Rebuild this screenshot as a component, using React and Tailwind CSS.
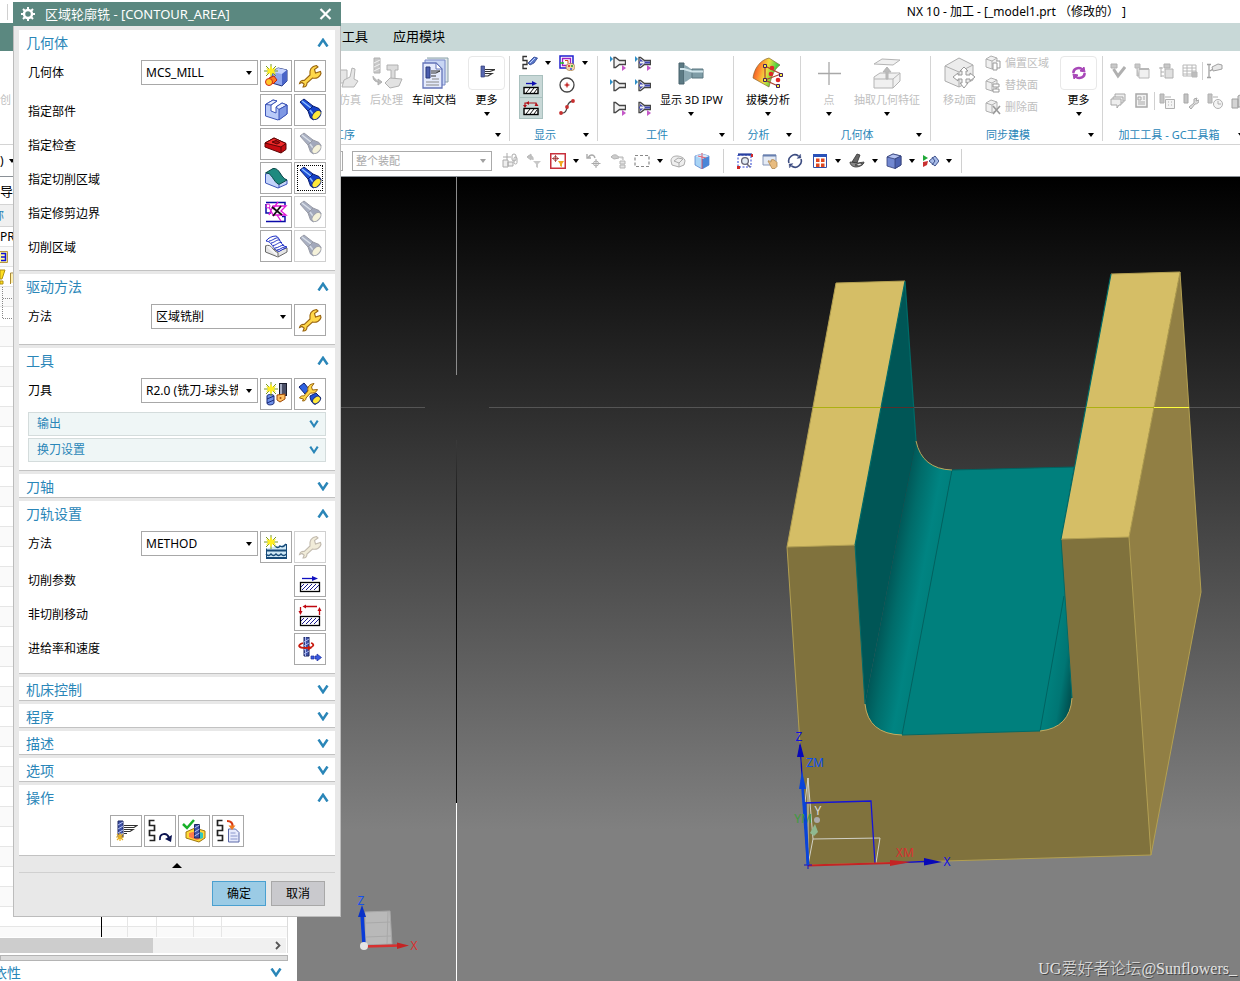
import { useState } from 'react';

const Caret = ({ className = 'text-black' }) => (
  <svg className={`shrink-0 ${className}`} width="6" height="4" viewBox="0 0 6 4" aria-hidden="true">
    <path d="M0 0h6L3 4z" fill="currentColor" />
  </svg>
);

const Chevron = ({ up, small }) => (
  <svg className="shrink-0" width={small ? 10 : 12} height={small ? 8 : 9} viewBox="0 0 12 9" fill="none" stroke="#2a86b8" strokeWidth="2.500" aria-hidden="true">
    <path d={up ? 'M1.500 8.500 6 1.800l4.500 6.700' : 'M1.500 .5 6 7.200 10.500 .5'} />
  </svg>
);

/* ---------- dialog icons, 24px grid ---------- */

const Icon24 = ({ children, faded }) => (
  <svg className={faded ? 'opacity-45' : ''} width="24" height="24" viewBox="0 0 24 24" fill="none" aria-hidden="true">
    {children}
  </svg>
);

const sparkle = (
  <g>
    <path d="M7 0v14M0 7h14M2 2l10 10M12 2 2 12" stroke="#7a9a20" strokeWidth="1" />
    <path d="M7 1.500 8.500 5 12 4l-2 3 2 3-3.500-1L7 12.500 5.500 9 2 10l2-3-2-3 3.500 1z" fill="#ffee20" />
  </g>
);

const TorchShape = () => (
  <g strokeLinejoin="round">
    <path d="M2 4 6 1l9 7-5 5z" fill="#1f50d8" stroke="#0a1e70" />
    <path d="m4 3 9 7" stroke="#8fc0ff" strokeWidth="1.500" />
    <path d="m10 13 5-5 6 2.500 2 3-7.500 8.500-3-2z" fill="#1340c8" stroke="#0a1e70" />
    <path d="m12 12 3 4" stroke="#7fb0ff" strokeWidth="1.500" />
    <ellipse cx="18.500" cy="17" rx="5.500" ry="3.300" transform="rotate(-46 18.500 17)" fill="#ffe93a" stroke="#23367a" />
  </g>
);

const WrenchShape = () => (
  <path
    d="M1.500 19.500c.5-2.500 2.500-3.500 4.800-3L12 11c-1-5 1.500-9 6.500-9.500L20 3l-3.500 2.500L17.500 9l5-1.500.5 2c-1 3.500-4.500 5.500-8.500 4.500L9 19c0 2.500-1.500 4.300-4 4l1.200-2.800L4 18.500z"
    fill="#ffd84a"
    stroke="#9a6510"
    strokeWidth="1.100"
  />
);

const hatch = (y) => (
  <g>
    <rect x="2.500" y={y + 0.5} width="19" height="9" fill="#fff" stroke="#000" strokeWidth="1.300" />
    <path d={`M4 ${y + 8}l6-6M8 ${y + 8}l6-6M12 ${y + 8}l6-6M16 ${y + 8}l5-5M3 ${y + 5}l3-3`} stroke="#1c1c90" />
  </g>
);

const icons = {
  torch: <TorchShape />,
  wrench: <WrenchShape />,
  geometry: (
    <g>
      <path d="m8 8 6-4 9 2v11l-5 5-10-3z" fill="#8fa6ee" stroke="#20347c" />
      <path d="m8 8 10 2 5-4-9-2z" fill="#c6d4ff" />
      <path d="m18 10 5-4v11l-5 5z" fill="#4a65c8" />
      {sparkle}
      <path d="m5 14 5-2 3 4-4 4z" fill="#ff7b20" stroke="#c02010" />
      <circle cx="5" cy="18" r="3.500" fill="#ffc62a" stroke="#d02818" />
    </g>
  ),
  part: (
    <g stroke="#3c55b8" strokeLinejoin="round">
      <path d="M1.500 6.500 9 2l4 1-6 4v6l5 2V9l6-4 5 2v9l-9 6-12.500-4z" fill="#b9caf8" />
      <path d="m1.500 6.500 7.500-4.500 4 1-6 4z" fill="#e6edff" />
      <path d="m12 9 6-4 5 2-8 4.500z" fill="#e6edff" />
      <path d="M15 11.500V22l8-6V7z" fill="#7f98e4" />
    </g>
  ),
  check: (
    <g stroke="#5c0606" strokeLinejoin="round">
      <path d="m1 11 9-5 12 5.500v6L17 21 1 15z" fill="#c80c12" />
      <path d="m1 11 9-5 12 5.500-5 3.500z" fill="#f02a2a" />
      <path d="m8 10 4-1.500 4 2-3 1.500z" fill="#b00a10" />
      <path d="M17 15v6" />
    </g>
  ),
  cutArea: (
    <g strokeLinejoin="round">
      <path d="M1.500 8v9L14 22l9-4v-4c-6-1-6-8-10-9z" fill="#c4d4fa" stroke="#3c55b8" />
      <path d="M1.500 7 9 2.500c7-1 7 9 14 11.500l-8 4.500C9 16 8 6 1.500 7z" fill="#1f8a80" stroke="#0c4a48" />
      <path d="M15 18.500V22" stroke="#3c55b8" />
    </g>
  ),
  trim: (
    <g>
      <path d="M2 2.500h19v3M2 4v9h5M2 21.500h19v-5h-3" stroke="#0a0aa8" strokeWidth="1.500" />
      <path d="m5 7 4 8h13l-5-4 5-5H9l-4 9M13 15l4 6M14 2 9 9" stroke="#e018d8" strokeWidth="1.300" />
      <circle cx="4" cy="6" r="2" stroke="#e018d8" />
      <path d="m8 7 10 8m-1-9-8 10" stroke="#111" strokeWidth="1.800" />
    </g>
  ),
  cutRegion: (
    <g strokeLinejoin="round">
      <path d="M1.500 12v6L14 23l9-5v-4l-9 3z" fill="#e4e4e4" stroke="#666" />
      <path d="M1.500 12C8 9 8 17 14 18.500V23" fill="#f6f6f6" stroke="#666" />
      <path d="M2 7c2-3 6-5 10-5 4 1 4 10 11 11l-8 4.500C9 16 8 7 2 7z" fill="#fff" stroke="#1d2fc4" />
      <path d="M5 7c3 0 7-4 9-3M7 9c3 0 6-4 9-3M9 11.500c3 0 6-4 9-3M11 14c3 0 6-3 9-3M13 16c3 0 5-3 8-3" stroke="#1d2fc4" />
    </g>
  ),
  newTool: (
    <g>
      <path d="M3 14c0-2 7-2 7 0v7c0 2-7 3-7 0z" fill="#6f90e8" stroke="#182a78" />
      <path d="m3 17 7-3m-7 7 7-3" stroke="#182a78" />
      <rect x="15.500" y="1.500" width="7" height="12" fill="#4a4f66" stroke="#1a1d2c" />
      <path d="M17 2v11" stroke="#c5cbe0" strokeWidth="1.500" />
      <path d="m13 13 8-1v5l-5 3-3-2z" fill="#ffc060" stroke="#a04a08" />
      <circle cx="16.500" cy="16" r="1" fill="#a04a08" />
      {sparkle}
    </g>
  ),
  editTool: (
    <g>
      <path d="m1 5 5-4 5 6-4 5z" fill="#2f62e0" stroke="#0a1e70" />
      <path d="m12 14 6-3 5 5-5 6c-3 1-6-4-6-8z" fill="#1f50d8" stroke="#0a1e70" />
      <ellipse cx="18.500" cy="18" rx="4.500" ry="3" transform="rotate(-40 18.500 18)" fill="#ffe93a" stroke="#23367a" />
      <path d="M1.500 16c1-2 2.500-2.500 4.300-2L10 9c-1-4 1.500-7 6-7.500L13.500 5l1 3 5-.5c-1 3-4 4-7 3.500L8 16c0 2-1 3-3.500 3l1-2z" fill="#ffd84a" stroke="#9a6510" />
    </g>
  ),
  method: (
    <g>
      <path d="M2.500 13.500V23h20V9" fill="#cfe8f6" stroke="#174a78" />
      <path d="M2 15.500h20.500" stroke="#174a78" strokeWidth="2" />
      <path d="M2 19q2.500 3 5 0 2.500 3 5 0 2.500 3 5 0 2.500 3 5.500 0M11 11q3 3 5 0 3 2 6-2" stroke="#174a78" strokeWidth="1.400" />
      <path d="M2 23h21" stroke="#174a78" strokeWidth="2" />
      {sparkle}
    </g>
  ),
  cutParams: (
    <g>
      <path d="M4 9.500h11" stroke="#1010c0" strokeWidth="1.300" />
      <path d="m20 9.500-6-2.500v5z" fill="#1010c0" />
      {hatch(13)}
    </g>
  ),
  nonCut: (
    <g>
      <path d="M8 3.500h11M2.500 4v5M21.500 7v5" stroke="#c00810" strokeWidth="1.300" />
      <path d="M4.500 3.500 8 1.500v4zM2.500 12 .5 8h4zM21.500 4l-2 4h4z" fill="#c00810" />
      {hatch(13)}
    </g>
  ),
  feeds: (
    <g>
      <path d="M6 0h5v19H6z" fill="#3f52a8" stroke="#1d2660" />
      <path d="m6 5 5-3m-5 7 5-3m-5 7 5-3m-5 7 5-3M7.500 0v19" stroke="#a9b7ee" />
      <path d="M5 6C-1 8 0 11 8 11s9-4 5-5" stroke="#c81c10" strokeWidth="1.800" />
      <path d="m10 13.500 4-2.500-4-2.500z" fill="#c81c10" />
      <path d="M13 19h3v3h-3z" fill="#3a5ae0" stroke="#1d2fa0" strokeWidth=".7" />
      <path d="M17 19h2v-2l4.500 3.500L19 24v-2h-2z" fill="#3a5ae0" stroke="#1d2fa0" strokeWidth=".7" />
    </g>
  ),
  generate: (
    <g>
      <path d="M4 2h5v16H4z" fill="#3f52a8" stroke="#1d2660" />
      <path d="m4 6 5-3m-5 7 5-3m-5 7 5-3m-5 6 5-3" stroke="#b6c2f2" />
      <path d="M10 6.500h13l-3 2H10M10 10.500h9l-3 2h-6M10 14.500h3" stroke="#333" strokeWidth="1.200" />
      <path d="M6 14v8m-4-4h8M3 15l6 6m0-6-6 6" stroke="#e8b020" strokeWidth="1.200" />
    </g>
  ),
  replay: (
    <g>
      <path d="M6.500 1.500h-5v5h5v5h-5v5h5v5h-5" stroke="#222" strokeWidth="1.700" />
      <path d="M12 21c-1-7 7-8 9-2" stroke="#0c1450" strokeWidth="1.800" />
      <path d="m24 16-1 7-6-3z" fill="#0c1450" />
    </g>
  ),
  verify: (
    <g>
      <path d="m4 13 9-4 10 3v7l-6 4-13-4z" fill="#ffd838" stroke="#a07810" />
      <path d="m7 14 8-2 6 2v5l-6 2-8-3z" fill="#ff7a4a" />
      <path d="m15 12 6 2v5l-3 1z" fill="#30c8c0" />
      <path d="M12.500 5.500h5V19h-5z" fill="#3f52a8" stroke="#1d2660" />
      <path d="m12.500 9 5-3m-5 7 5-3m-5 7 5-3" stroke="#b6c2f2" />
      <path d="m1 5 4 4 7-8" stroke="#18b028" strokeWidth="2.500" />
    </g>
  ),
  list: (
    <g>
      <path d="M6.500 1.500h-5v5h5v5h-5v5h5v5h-5" stroke="#222" strokeWidth="1.700" />
      <path d="M12.500 10h7l3.500 3.500V23H12.500z" fill="#e6eafc" stroke="#5a68a8" />
      <path d="M14.500 14h5m-5 3h7m-7 3h7" stroke="#8a96cc" />
      <path d="M11 2c4 0 6 2 5.500 6" stroke="#d83a10" strokeWidth="2.200" />
      <path d="m12.500 6.500 7 0L16 11z" fill="#f07a20" />
    </g>
  ),
};

/* ---------- small toolbar icons, 16px grid ---------- */

const Icon16 = ({ children }) => (
  <svg className="shrink-0" width="16" height="16" viewBox="0 0 16 16" fill="none" aria-hidden="true">{children}</svg>
);

const miniHatch = (
  <g>
    <rect x="1" y="8.500" width="14" height="6" fill="#fff" stroke="#000" strokeWidth="1.400" />
    <path d="m3 14 4-5m0 5 4-5m0 5 3-4" stroke="#111" />
  </g>
);

const Endmill = ({ fill, left, right }) => (
  <Icon16>
    <path d="M4 2.500h1.500L9.500 5.500h6v4h-6l-4 3H4z" fill="#f2f2f2" stroke="#444" strokeWidth="1.300" />
    {fill && <path d="M4 6.500h11v2H4zM5 4v7l5-3.500z" fill="#3d44b0" />}
    {left && <path d="M0 1v6l3-3z" fill="#2f8fc8" />}
    {right && <path d="M12 10v6l4-3z" fill="#c458c8" />}
  </Icon16>
);

const small = {
  pathTorch: <g><path d="M5 1.500H1v4h4v4H1v4h4" stroke="#333" strokeWidth="1.300" /><path d="m6 8 2-2 4-4 3.500 1L12 8l-4 2z" fill="#5a78c8" stroke="#2c4490" strokeWidth=".8" /><path d="m8 8 5-5" stroke="#c0d2ff" /></g>,
  palette: <g><path d="M1 1h13v12H1z" stroke="#2020d0" strokeWidth="1.500" /><path d="M3.500 3.500h8v7h-8z" stroke="#a020c0" strokeWidth="1.300" /><path d="M6 5.500h3v3" stroke="#d05010" /><path d="M1 8h4" stroke="#20c020" strokeWidth="1.500" /><ellipse cx="11.500" cy="12" rx="4.500" ry="3.600" fill="#efd4a8" stroke="#a87840" strokeWidth=".7" /><circle cx="10" cy="11" r="1" fill="#d02020" /><circle cx="13" cy="11" r="1" fill="#20a020" /><circle cx="12" cy="14" r="1" fill="#3050e0" /></g>,
  cut: <g><path d="M3 4.500h7" stroke="#1010b0" strokeWidth="1.300" /><path d="M14 4.500 9 2v5z" fill="#1010b0" />{miniHatch}</g>,
  nonCut: <g><path d="M2 6V3h11v3" stroke="#b01018" strokeWidth="1.200" /><path d="M2 8 0 5h4zM13.500 3l-2 3h4zM3 3l3-2v4z" fill="#b01018" />{miniHatch}</g>,
  circle: <g><circle cx="8" cy="8" r="7" stroke="#444" strokeWidth="1.300" /><circle cx="8" cy="8" r="1.700" fill="#c83030" /><path d="M8 5v6M5 8h6" stroke="#c83030" strokeWidth=".6" /></g>,
  spline: <g><path d="M2 14c9 1 3-11 12-12" stroke="#444" strokeWidth="1.300" /><circle cx="2" cy="14" r="1.900" fill="#c83030" /><circle cx="8" cy="8" r="1.900" fill="#c83030" /><circle cx="14" cy="2" r="1.900" fill="#c83030" /></g>,
  // disabled ones
  offsetFace: <g stroke="#b0b0b0"><path d="m1 4 5-3 6 2v8l-5 3-6-2z" fill="#f0f0f0" /><path d="m1 4 6 2 5-3M7 6v8" /><path d="M8 8h4v7H8zM11 6h4v7h-3" fill="#fff" stroke="#999" /></g>,
  replaceFace: <g stroke="#b0b0b0"><path d="m1 4 5-3 6 2v8l-5 3-6-2z" fill="#f0f0f0" /><path d="m1 4 6 2 5-3M7 6v8" /><path d="M8 7h6v3H8zm0 5h6v3H8z" fill="#fff" stroke="#999" /></g>,
  deleteFace: <g stroke="#b0b0b0"><path d="m1 4 5-3 6 2v8l-5 3-6-2z" fill="#f0f0f0" /><path d="m1 4 6 2 5-3M7 6v8" /><path d="m8 7 7 8m0-8-7 8" stroke="#999" strokeWidth="1.600" /></g>,
  gcCheck: <g><path d="M1 1h6v4H1z" fill="#c8c8c8" stroke="#b0b0b0" /><path d="m3.500 6 4.500 7 7-9" stroke="#b0b0b0" strokeWidth="3" /></g>,
  gcPart: <g stroke="#b8b8b8"><path d="M1 1h5v4H1zM3 5v8h3" fill="#c8c8c8" /><path d="M5 6h10v9H5z" fill="#f0f0f0" /><path d="M5 6h10" strokeWidth="2" /></g>,
  gcTree: <g stroke="#b0b0b0"><path d="M6 1h6v4H6z" fill="#c8c8c8" /><path d="M3 4v10M1 5h4M3 9h3M3 13h3" /><path d="M7 6h8v9H7z" fill="#e0e0e0" /></g>,
  gcTable: <g stroke="#b8b8b8"><path d="M1 2h13v11H1zM1 5h13M1 8h13M1 11h13M5 2v11M10 2v11" /><path d="M10 9h5v5h-5z" fill="#bdbdbd" /></g>,
  gcFlag: <g stroke="#a0a0a0"><path d="M2 2v12M0 1.500h4M0 14.500h4M3 8l3-2" strokeWidth="1.300" /><path d="m5 4 6-3 4 1v4l-4 1-5 1z" fill="#e8e8e8" /></g>,
  gcStack: <g stroke="#a8a8a8" fill="#eee"><path d="M5 1h10v7H5z" /><path d="M3 4h10v6H3z" /><path d="M1 6h10v6H9l-2 3v-3H1z" /></g>,
  gcDoc: <g stroke="#a8a8a8"><path d="M2 1h11v13H2z" fill="#f2f2f2" strokeWidth="1.500" /><path d="M4 4h3v3H4zM9 4h2M9 6h2M4 9h7M4 11h7" /></g>,
  gcCalc: <g stroke="#b0b0b0"><path d="M1 1h4v9H1zM6 4h6" fill="#c4c4c4" /><path d="M6.500 6.500h9v9h-9zM9 9h1m2 0h1m-4 3h1m2 0h1" fill="#f4f4f4" /></g>,
  gcTool: <g stroke="#a8a8a8"><path d="M1 1h4v9H1z" fill="#c4c4c4" /><path d="m6 14 5-4 0-4 3-1-1 3 3-1c0 3-2 4-4 4l-4 5z" fill="#ddd" /></g>,
  gcClock: <g stroke="#b0b0b0"><path d="M1 1h4v9H1z" fill="#c4c4c4" /><circle cx="11" cy="11" r="4.500" fill="#f4f4f4" /><path d="M11 8v3h3M6 4h5" /></g>,
  gcBox: <g stroke="#a0a0a0"><path d="M1 6h6v9H1zM7 3l4-2v13H7z" fill="#d4d4d4" /></g>,
  selAsm: <g stroke="#aaa"><path d="M5 0v8M1 4h8" /><path d="M1 7h5v7H1zM6 9h5v4H6z" fill="#eee" /><rect x="10" y="1" width="4" height="7" rx="2" /><rect x="12" y="4" width="3" height="7" rx="1.500" /></g>,
  selFilter: <g><path d="M1 4c3-3 7-1 6 3M1 4l4-3v6z" fill="#c4c4c4" stroke="#bbb" /><path d="M7 8h8l-3 3v4l-2-1v-3z" fill="#c8c8c8" /></g>,
  selSnap: <g><rect x=".75" y=".75" width="14.500" height="14.500" stroke="#c8303c" strokeWidth="1.500" /><path d="M5.500 2v7M2 5.500h7" stroke="#a03030" strokeWidth=".8" /><circle cx="5.500" cy="5.500" r="2" stroke="#a03030" strokeWidth=".8" /><path d="M8 8h6l-2 3v3l-2-1v-2z" fill="#f0a820" /></g>,
  selUndo: <g stroke="#aaa"><path d="M2 5c2-4 6-4 7 0M1 1v4h4" strokeWidth="1.400" /><path d="M10 6v9M5.500 10.500h9" /><circle cx="10" cy="10.500" r="2.500" /></g>,
  selSpray: <g stroke="#b4b4b4"><path d="M1 4c3-4 7-2 8 1L4 6z" fill="#ccc" /><path d="M8 4h5v3M10 8h5v3h-5zM10 12h5v3h-5z" fill="#e4e4e4" /></g>,
  selRect: <rect x="1" y="2.500" width="14" height="11" stroke="#888" strokeWidth="1.200" strokeDasharray="3 2" />,
  selDome: <g stroke="#aaa"><path d="M1 8c0-4 3-5 6-5s8 2 8 5l-1 4-5 2-7-2z" fill="#eee" /><path d="m4 8 4-3 5 1-4 4v4M4 8l5 2" /></g>,
  selCube: <g><path d="m1 3 7-2 7 2v9l-7 4-7-4z" fill="#a8d4f6" stroke="#4878c8" strokeWidth=".7" /><path d="m8 6 7-3v9l-7 4z" fill="#4a86d8" /><path d="M1 3l7 3 7-3-7-2z" fill="#d6e8fa" /><path d="M8 0v16M4 3l8 2" stroke="#e05060" strokeWidth=".9" /></g>,
  vFit: <g><rect x="1" y="2" width="13" height="12" stroke="#2840d0" strokeDasharray="2 1.500" /><path d="M1 1.500h14" stroke="#2840a0" strokeWidth="2.200" /><circle cx="8" cy="8" r="3.400" fill="#e2ecf4" stroke="#667" strokeWidth="1.300" /><path d="m10 11 3 3" stroke="#667" strokeWidth="1.600" /><path d="M0 13h3v3H0zM14 1h2v3h-2z" fill="#d02828" /></g>,
  vPan: <g><path d="M1 2h13v10H1z" fill="#e4eaf4" stroke="#8898b8" /><path d="M1 2.500h13" stroke="#6880b0" strokeWidth="2" /><path d="M6 8c1-1 2 1 3 1V7l2-.5 2 1 2 2v4l-2 2h-3z" fill="#e8bc80" stroke="#a87c40" strokeWidth=".7" /></g>,
  vRotate: <g stroke="#3c4c80" strokeWidth="1.600"><path d="M2 10A6.200 6.200 0 0 1 11.500 3M14 6A6.200 6.200 0 0 1 4.500 13" /><path d="M10 5.500 14 5l-.5-4zM6 10.500 2 11l.5 4z" fill="#3c4c80" strokeWidth=".3" /></g>,
  vWindow: <g><path d="M1.500 1.500h13v13h-13z" fill="#fff" stroke="#3450a8" /><path d="M1 2.500h14" stroke="#2a52b8" strokeWidth="3" /><path d="M4 5.500h3.500V9H4zM9 5.500h3.500V9H9zM4 10.500h3.500V14H4zM9 10.500h3.500V14H9z" fill="#e04820" /></g>,
  vShade: <g stroke="#333" strokeWidth=".8"><path d="M3 9 8 1l3 1-3 8z" fill="#666" /><path d="M1 9c3 0 5 1 8 1l6-1c0 3-5 5-8 5s-6-2-6-5z" fill="#888" /><path d="m6 12 5-2 3 1-4 2z" fill="#eee" /></g>,
  vCube: <g stroke="#324078" strokeWidth=".8"><path d="m1 4 6-3 8 2v9l-6 3.500-8-2.500z" fill="#7288d0" /><path d="m1 4 8 2 6-3-8-2z" fill="#b4c2f0" /><path d="m9 6 6-3v9l-6 3.500z" fill="#4c62b0" /></g>,
  vSection: <g><path d="m0 2 5 3-5 3z" fill="#20a838" /><path d="m0 9 5-1-1 4-4 2z" fill="#c83030" /><path d="m6 8 6-5 4 5-4 5z" fill="#a8bce8" stroke="#3c508c" /><path d="m9 4 3 4-3 4" stroke="#3c508c" /></g>,
  moreOps: <g><path d="M2 1h3.500v11H2z" fill="#5868b0" stroke="#303c78" strokeWidth=".7" /><path d="M6 4.500h10l-5 2H6M6 8.500h7l-4 2.500H6" stroke="#333" strokeWidth="1.200" /></g>,
  moreSync: <g stroke="#a848b8" strokeWidth="2.600"><path d="M2.500 8C2 4 7 1.500 11 4M13.500 8c.5 4-4.500 6.500-8.500 4" /><path d="m13 2 1 5-5-1zM3 14l-1-5 5 1z" fill="#a848b8" strokeWidth="1" /></g>,
};

/* ---------- large ribbon icons, 32px grid ---------- */

const Icon32 = ({ children }) => (
  <svg className="shrink-0" width="32" height="32" viewBox="0 0 32 32" fill="none" aria-hidden="true">{children}</svg>
);

const large = {
  simulate: <g stroke="#b4b4b4" fill="#e6e6e6"><path d="M6 13h7v13H6z" /><path d="m10 23 6-3 2-9 3 1-1 10 4 2-4 6H8z" /></g>,
  post: <g stroke="#b0b0b0"><path d="M3 1h6v15H3z" fill="#c8c8c8" /><path d="m3 6 6-3m-6 7 6-3m-6 7 6-3" stroke="#f2f2f2" /><path d="M16 8h11v5h-3v10h-4V13h-4z" fill="#dcdcdc" /><path d="m14 26 5-5 12 1-3 7-9 2z" fill="#e2e2e2" /><path d="M2 19c0 5 3 6 6 6M7 22l4 3-4 3z" fill="#bbb" /></g>,
  shopDoc: <g stroke="#6474b8"><path d="M9 1h21v24h-3" fill="#dfe8ea" stroke="#8ba0a8" /><path d="M7 3h20v25H7z" fill="#c8d6f4" stroke="#7888c8" /><path d="M5 6h13l6 6v19H5z" fill="#e4eafc" strokeWidth="1.300" /><path d="M18 6v6h6z" fill="#fff" /><path d="M8 10h4v11H8z" fill="#4a5cae" stroke="#283878" /><path d="M13 14h9l-4 2h-5M13 19h5" stroke="#333" /><path d="M14 22h7M8 25h13M8 28h13" stroke="#888" /></g>,
  ipw: <g><path d="M4 6h5v21H4z" fill="#5c7a84" stroke="#48626c" /><path d="M9 8c3 0 6 4 8 4v9c-2 0-5 4-8 4z" fill="#8ba8b2" /><path d="M17 12h11v9H17z" fill="#7e9ca6" stroke="#5a7680" /><path d="M5 12h4l8 2.500h11" stroke="#d2e6ec" strokeWidth="2" /></g>,
  draft: (
    <g>
      <defs>
        <linearGradient id="draftRamp" x1="0" y1=".3" x2="1" y2=".6">
          <stop offset="0" stopColor="#e84a20" /><stop offset=".25" stopColor="#ff8a30" /><stop offset=".5" stopColor="#f0e040" /><stop offset=".8" stopColor="#48d040" /><stop offset="1" stopColor="#20c890" />
        </linearGradient>
      </defs>
      <path d="M1 21C2 12 8 3 17 1l11 7c-7 5-9 14-11 22z" fill="url(#draftRamp)" stroke="#8a6a30" strokeWidth=".7" />
      <path d="M13 9v14l13 6M13 23l16-6M13 9l16 8" stroke="#b04030" strokeWidth="1.200" />
      <circle cx="20" cy="11" r="2.300" fill="#e02828" /><circle cx="19" cy="17" r="2.300" fill="#e02828" /><circle cx="26" cy="23" r="2.300" fill="#e02828" />
      <path d="M11.500 7.500h3v3h-3zM11.500 21.500h3v3h-3zM27.500 16.500h3v3h-3zM24.500 27.500h3v3h-3z" fill="#ffee40" stroke="#402060" />
    </g>
  ),
  point: <path d="M16 5v23M5 16.500h23" stroke="#a8a8a8" strokeWidth="1.300" />,
  extract: <g stroke="#b4b4b4" fill="#f0f0f0"><path d="m3 7 8-5 18 1-7 5z" /><path d="m3 20 6-4h20v8l-7 7H3z" /><path d="M3 22h19l7-6M22 22v9" /><path d="M15 22v-7h-3l4-5 4 5h-3v7z" fill="#bbb" /></g>,
  moveFace: <g stroke="#acacac"><path d="m1 9 14-8 14 7v15l-14 7L1 24z" fill="#ececec" /><path d="m1 9 14 6 14-7M15 15v15" /><path d="m20 10 4 4h-2v4h4v-2l5 4-5 4v-2h-4v4h2l-4 5-4-5h2v-4h-4v2l-5-4 5-4v2h4v-4h-2z" fill="#fff" stroke="#999" /></g>,
};

/* ---------- ribbon pieces ---------- */

const Group = ({ label, className, children }) => (
  <section className={`flex h-[85px] shrink-0 flex-col justify-between border-r border-[#d4d4d4] ${className}`}>
    <div className="flex">{children}</div>
    <div className="flex h-[12px] items-center text-[11px] leading-[12px] text-[#2a86b8]">
      <span className="flex-1 text-center whitespace-nowrap">{label}</span>
      <span className="flex w-[17px] pl-[3px]"><Caret /></span>
    </div>
  </section>
);

const BigButton = ({ icon, label, disabled, menu, className = '' }) => (
  <button type="button" disabled={disabled} className={`flex shrink-0 flex-col items-center ${className} ${disabled ? 'text-[#c0c0c0]' : 'text-black'}`}>
    <span className="flex h-[33px] items-center justify-center"><Icon32>{large[icon]}</Icon32></span>
    <span className="mt-1 text-[11px] leading-[14px] whitespace-nowrap">{label}</span>
    {menu && <span className="mt-[5px]"><Caret /></span>}
  </button>
);

const MoreButton = ({ icon, className }) => (
  <button type="button" className={`flex w-[37px] shrink-0 flex-col items-center ${className}`}>
    <span className="flex h-[34px] w-full items-center justify-center rounded border border-[#e8e8e8]"><Icon16>{small[icon]}</Icon16></span>
    <span className="mt-[3px] text-[11px] leading-[14px]">更多</span>
    <span className="mt-[5px]"><Caret /></span>
  </button>
);

const MiniButton = ({ icon, label, menu }) => (
  <button type="button" aria-label={label} className="flex h-[14px] items-center gap-[7px]">
    <Icon16>{small[icon]}</Icon16>
    {menu && <Caret />}
  </button>
);

const Separator = ({ className }) => <span className={`w-px shrink-0 bg-[#d0d0d0] ${className}`} />;

const Ribbon = () => (
  <div className="flex h-[94px] overflow-hidden border-b border-[#d4d4d4] bg-white pt-[5px]">
    <div className="w-[196px] shrink-0 pt-[37px] text-[11px] leading-[14px] text-[#c0c0c0]">创</div>
    <Group label="工序" className="w-[314px]">
      <BigButton icon="simulate" label="仿真" disabled className="ml-[138px]" />
      <BigButton icon="post" label="后处理" disabled className="ml-1" />
      <BigButton icon="shopDoc" label="车间文档" className="ml-[9px]" />
      <MoreButton icon="moreOps" className="ml-[12px]" />
    </Group>
    <Group label="显示" className="w-[88px]">
      <div className="ml-[9px] flex w-9 flex-col items-start">
        <div className="pl-[3px]"><MiniButton icon="pathTorch" label="显示刀轨" menu /></div>
        <div className="mt-[5px] border border-[#a9c0be] bg-[#c8d8d7]">
          <button type="button" aria-label="切削" aria-pressed="true" className="flex h-[21px] w-[22px] items-center justify-center"><Icon16>{small.cut}</Icon16></button>
          <button type="button" aria-label="非切削" aria-pressed="true" className="flex h-[21px] w-[22px] items-center justify-center border-t border-[#a9c0be]"><Icon16>{small.nonCut}</Icon16></button>
        </div>
      </div>
      <div className="ml-1 flex flex-col gap-2">
        <MiniButton icon="palette" label="颜色" menu />
        <MiniButton icon="circle" label="圆心" />
        <MiniButton icon="spline" label="样条" />
      </div>
    </Group>
    <Group label="工件" className="w-[136px]">
      <div className="ml-3 grid grid-cols-2 gap-x-[9px] gap-y-2">
        {[[1, 1], [1, 0], [0, 1]].flatMap(([l, r]) => [false, true].map((fill) => (
          <button key={`${l}${r}${fill}`} type="button" aria-label="工件" className="flex h-[14px] items-center">
            <Endmill fill={fill} left={l === 1} right={r === 1} />
          </button>
        )))}
      </div>
      <BigButton icon="ipw" label="显示 3D IPW" menu className="ml-[9px]" />
    </Group>
    <Group label="分析" className="w-[67px]">
      <BigButton icon="draft" label="拔模分析" menu className="ml-3" />
    </Group>
    <Group label="几何体" className="w-[130px]">
      <BigButton icon="point" label="点" disabled menu className="ml-3" />
      <BigButton icon="extract" label="抽取几何特征" disabled menu className="ml-[9px]" />
    </Group>
    <Group label="同步建模" className="w-[172px]">
      <BigButton icon="moveFace" label="移动面" disabled className="ml-3" />
      <div className="ml-[9px] flex flex-col gap-2 text-[11px] leading-[14px] text-[#c0c0c0]">
        {[['offsetFace', '偏置区域'], ['replaceFace', '替换面'], ['deleteFace', '删除面']].map(([icon, label]) => (
          <button key={icon} type="button" disabled className="flex h-[14px] items-center gap-1">
            <Icon16>{small[icon]}</Icon16>{label}
          </button>
        ))}
      </div>
      <MoreButton icon="moreSync" className="ml-[11px]" />
    </Group>
    <Group label="加工工具 - GC工具箱" className="w-[150px]">
      <div className="ml-[7px]">
        <div className="flex h-[30px] items-center gap-2">
          {['gcCheck', 'gcPart', 'gcTree', 'gcTable'].map((k) => <Icon16 key={k}>{small[k]}</Icon16>)}
          <Separator className="-mx-1 h-[18px]" />
          <Icon16>{small.gcFlag}</Icon16>
        </div>
        <div className="flex h-[30px] items-center gap-2">
          {['gcStack', 'gcDoc'].map((k) => <Icon16 key={k}>{small[k]}</Icon16>)}
          <Separator className="-mx-1 h-[18px]" />
          {['gcCalc', 'gcTool', 'gcClock', 'gcBox'].map((k) => <Icon16 key={k}>{small[k]}</Icon16>)}
        </div>
      </div>
    </Group>
  </div>
);

const ToolCell = ({ icon, menu, wide }) => (
  <button type="button" aria-label={icon} className="flex h-6 shrink-0 items-center">
    <span className={`flex justify-center ${wide ? 'w-[25px]' : 'w-6'}`}><Icon16>{small[icon]}</Icon16></span>
    {menu && <span className="flex w-3 justify-center"><Caret /></span>}
  </button>
);

const SelectionBar = () => (
  <div className="flex h-8 items-center overflow-hidden border-b border-[#8a9096] bg-white">
    <div className="flex w-[343px] shrink-0 items-center gap-1 text-[12px]">
      <span className="w-[5px]">)</span><Caret />
      <span className="ml-auto h-5 w-10 border border-[#aaa]" />
    </div>
    <div className="relative mr-[6px] ml-[9px] w-[140px] shrink-0">
      <select aria-label="选择范围" disabled className="block h-5 w-full appearance-none border border-[#aaa] bg-white px-[3px] text-[11px] leading-[18px] text-[#a8a8a8] opacity-100">
        <option>整个装配</option>
      </select>
      <span className="pointer-events-none absolute inset-y-0 right-[6px] flex items-center"><Caret className="text-[#a0a0a0]" /></span>
    </div>
    <ToolCell icon="selAsm" />
    <ToolCell icon="selFilter" />
    <ToolCell icon="selSnap" menu />
    <ToolCell icon="selUndo" />
    <ToolCell icon="selSpray" />
    <ToolCell icon="selRect" menu />
    <ToolCell icon="selDome" />
    <ToolCell icon="selCube" />
    <Separator className="mr-2 ml-[9px] h-6" />
    <ToolCell icon="vFit" wide />
    <ToolCell icon="vPan" wide />
    <ToolCell icon="vRotate" wide />
    <ToolCell icon="vWindow" wide menu />
    <ToolCell icon="vShade" wide menu />
    <ToolCell icon="vCube" wide menu />
    <ToolCell icon="vSection" wide menu />
    <Separator className="ml-[6px] h-6" />
  </div>
);

/* ---------- navigator strip behind the dialog ---------- */

const Navigator = () => (
  <aside className="flex w-[297px] shrink-0 flex-col bg-white">
    <div className="mr-[9px] flex min-h-0 flex-1 flex-col overflow-hidden border-r border-[#dcdcdc]">
      <div className="h-7 shrink-0 border-b border-[#d4d4d4] text-[13px] leading-7">导</div>
      <div className="h-[22px] shrink-0 border-b border-[#d4d4d4] bg-[#f0f0f0] text-[12px] leading-[22px] text-[#2a86b8]"><span className="-ml-2">称</span></div>
      <div className="h-5 shrink-0 border-b border-[#e4e4e4] text-[12px] leading-5">PR</div>
      <div className="flex h-5 shrink-0 items-center border-b border-[#e4e4e4] bg-[#fafafa]">
        <svg width="12" height="12" viewBox="0 0 12 12" fill="none" aria-hidden="true"><path d="M0 .5h7.500v11H0" fill="#fff7a0" stroke="#b89840" /><path d="M1 2.500h4.500v7H1M1 6h4.500" stroke="#1010d8" strokeWidth="1.500" /></svg>
      </div>
      <div className="flex h-5 shrink-0 items-center border-b border-[#e4e4e4]">
        <svg width="14" height="16" viewBox="0 0 14 16" fill="none" aria-hidden="true"><path d="M0 1h5L2 10H0zM0 12h3v3H0z" fill="#ffe020" stroke="#b09010" /><path d="M10.500 15V4h4" stroke="#a88830" /><path d="M11 5h3v9h-3z" fill="#fff0b0" /></svg>
      </div>
      <div className="relative min-h-0 flex-1 bg-[repeating-linear-gradient(to_bottom,#fafafa_0px,#fafafa_19px,#e6e6e6_19px,#e6e6e6_20px,#ffffff_20px,#ffffff_39px,#e6e6e6_39px,#e6e6e6_40px)]">
        <svg className="absolute top-0 left-0" width="12" height="32" viewBox="0 0 12 32" fill="none" stroke="#888" strokeDasharray="1 1" aria-hidden="true"><path d="M2.500 0v31M3 11.500h9M3 31.500h9" /></svg>
        <div className="flex h-full">
          <span className="w-[102px] border-r border-black" />
          <span className="w-[26px] border-r border-[#e6e6e6]" />
          <span className="w-[29px] border-r border-[#e6e6e6]" />
          <span className="w-[37px] border-r border-[#e6e6e6]" />
          <span className="w-7 border-r border-[#e6e6e6]" />
        </div>
      </div>
      <div className="mt-px mr-px flex h-[15px] shrink-0 items-center justify-between bg-[#f0f0f0]">
        <span className="h-full w-[153px] bg-[#cdcdcd]" />
        <svg className="mr-[5px]" width="6" height="9" viewBox="0 0 6 9" fill="none" stroke="#555" strokeWidth="1.800" aria-hidden="true"><path d="m1 1 3.500 3.500L1 8" /></svg>
      </div>
    </div>
    <div className="mt-[2px] mr-[9px] h-[6px] shrink-0 border border-[#b4b4b4] bg-[#dcdcdc]" />
    <div className="flex h-5 shrink-0 items-center justify-between overflow-hidden pt-[3px] pr-[15px] text-[14px] leading-[17px] text-[#2a86b8]">
      <span className="-ml-[7px]">依性</span>
      <Chevron />
    </div>
  </aside>
);

/* ---------- graphics window ---------- */

const Viewport = () => (
  <main className="relative min-w-0 flex-1 overflow-hidden bg-[#808080]">
    <svg className="block h-full w-full" viewBox="297 177 943 804" preserveAspectRatio="xMaxYMax slice" role="img" aria-label="_model1">
      <defs>
        <linearGradient id="sky" gradientUnits="userSpaceOnUse" x1="0" y1="177" x2="0" y2="830">
          <stop offset="0" stopColor="#000" /><stop offset="1" stopColor="#808080" />
        </linearGradient>
        <linearGradient id="filletL" gradientUnits="userSpaceOnUse" x1="884" y1="600" x2="927" y2="608">
          <stop offset="0" stopColor="#005656" /><stop offset=".3" stopColor="#006c6a" /><stop offset=".75" stopColor="#008482" /><stop offset="1" stopColor="#00807d" />
        </linearGradient>
        <linearGradient id="filletR" gradientUnits="userSpaceOnUse" x1="1048" y1="690" x2="1073" y2="694">
          <stop offset="0" stopColor="#00807d" /><stop offset=".5" stopColor="#007674" /><stop offset="1" stopColor="#004c4c" />
        </linearGradient>
        <linearGradient id="crossV" gradientUnits="userSpaceOnUse" x1="0" y1="440" x2="0" y2="560">
          <stop offset="0" stopColor="#3a3a3a" /><stop offset="1" stopColor="#000" />
        </linearGradient>
      </defs>
      <rect x="297" y="177" width="943" height="804" fill="url(#sky)" />

      <g shapeRendering="crispEdges">
        <rect x="456" y="177" width="1" height="198" fill="#8c8c8c" />
        <rect x="456" y="440" width="1" height="363" fill="url(#crossV)" />
        <rect x="456" y="803" width="1" height="178" fill="#fff" />
        <rect x="297" y="407" width="128" height="1" fill="#555" />
        <rect x="489" y="407" width="751" height="1" fill="#555" />
      </g>

      <path d="M905 281 916 441 865 704 855 545z" fill="#005656" />
      <path d="M916 441Q922 469 952 470L902 735Q868 734 865 704z" fill="url(#filletL)" />
      <path d="M952 470 1074 467 1061 539 1072 698 1040 731 902 735z" fill="#00807d" />
      <path d="M1064 596 1072 698Q1070 728 1040 731z" fill="url(#filletR)" />
      <path d="M952 470 902 735M1064 596 1040 731M952 470l122-3" fill="none" stroke="#006361" />
      <path d="M916 441Q922 469 952 470" fill="none" stroke="#b8a75c" />

      <path d="M787 547 855 545 865 704Q868 734 902 735L1040 731Q1070 728 1072 698L1061 539 1129 537 1151 855 808 865z" fill="#80723d" />
      <path d="M865 704Q868 734 902 735M1040 731Q1070 728 1072 698" fill="none" stroke="#c0ac60" />
      <path d="M855 545 865 704M902 735l138-4M1072 698l-11-159" fill="none" stroke="#006b68" />
      <path d="M836 283 905 281 855 545 787 547z" fill="#d5be66" />
      <path d="M1111 274 1180 272 1129 537 1061 539z" fill="#d5be66" />
      <path d="M1180 272 1201 592 1151 855 1129 537z" fill="#917f44" />
      <path d="M836 283 905 281M787 547l68-2M836 283 787 547l21 318 343-10 50-263-21-320-69 2M1061 539l68-2 51-265M1129 537l22 318" fill="none" stroke="#b3a052" />
      <path d="M905 281 855 545M1111 274 1061 539M905 281l11 160" fill="none" stroke="#006b68" strokeWidth="1.200" />

      <g shapeRendering="crispEdges">
        <rect x="813" y="407" width="68" height="1" fill="#adb012" />
        <rect x="881" y="407" width="33" height="1" fill="#56302c" />
        <rect x="1086" y="407" width="68" height="1" fill="#adb012" />
        <rect x="1154" y="407" width="35" height="1" fill="#ffff3c" />
      </g>

      <g fill="none">
        <path d="M808 865V778l-3 24M808 778l5 61-5 26M813 839l67-1-4 25" stroke="#d2d2c8" />
        <path d="M804 803 871 801 875 863" stroke="#1414d8" strokeWidth="1.300" />
        <path d="M808 865 800 745" stroke="#0808b8" strokeWidth="1.300" />
        <path d="M808 865 802 780" stroke="#0a44d8" strokeWidth="2.600" />
        <path d="M890 863 925 861.500" stroke="#1010c8" strokeWidth="1.400" />
        <path d="M808 865.500 892 863" stroke="#c42424" strokeWidth="2" />
        <path d="M804 865h8M808 861v8" stroke="#1010c8" />
      </g>
      <path d="m800 742 4 15h-7z" fill="#0808b8" />
      <path d="m802 771 4 18h-7z" fill="#0a44d8" />
      <path d="m890 860 21 2-21 4z" fill="#c42424" />
      <path d="m924 858 18 4-18 3.500z" fill="#0808b8" />
      <g className="font-['Noto_Sans',sans-serif]" fontSize="12" textAnchor="middle">
        <text x="799" y="741" fill="#1010e0">Z</text>
        <text x="815" y="767" fill="#0a50f0">ZM</text>
        <text x="947" y="866" fill="#1010e0">X</text>
        <text x="905" y="857" fill="#d83030">XM</text>
        <text x="803" y="823" fill="#3c9c3c">YM</text>
        <text x="818" y="815" fill="#dcdcdc">Y</text>
      </g>
      <circle cx="817" cy="820" r="3" fill="#aaa" />
      <path d="m815 824 3 8-4 4-4-3z" fill="#8fb890" />
      <path d="M808 865 805 802" stroke="#0a44d8" strokeWidth="2.600" />

      {/* view triad */}
      <path d="M365 912 390 911 392 944 365 945z" fill="#b9b9b9" stroke="#a6a6a6" />
      <path d="M366 923l25-1M366 937l25-1M388 911l-1 33" stroke="#a9a9a9" />
      <path d="M364 945 362 914" stroke="#0a3cd8" strokeWidth="3.500" />
      <path d="m362 905 4 12h-8z" fill="#0a32c8" />
      <path d="M364 946.500 400 945.500" stroke="#d83030" strokeWidth="2.500" />
      <path d="m397 942.500 12 3-12 3.500z" fill="#c42424" />
      <circle cx="364" cy="946" r="4" fill="#e4e4e4" />
      <g className="font-['Noto_Sans',sans-serif]" fontSize="12" textAnchor="middle">
        <text x="361" y="905" fill="#1450f0">Z</text>
        <text x="414" y="950" fill="#d83030">X</text>
      </g>
    </svg>
    <p className="absolute right-[3px] bottom-0 font-['Liberation_Serif','Noto_Sans_CJK_SC',serif] text-[16px] leading-6 font-light text-[#e2e2e2] [text-shadow:1px_1px_0_#444]">
      UG爱好者论坛@Sunflowers_
    </p>
  </main>
);

/* ---------- operation dialog ---------- */

const IconButton = ({ icon, label, disabled, focused }) => (
  <button
    type="button"
    aria-label={label}
    disabled={disabled}
    className={`flex size-8 shrink-0 items-center justify-center border bg-white ${disabled ? 'border-[#d0d0d0]' : 'border-[#a8a8a8]'}`}
  >
    <span className={`flex size-[26px] items-center justify-center ${focused ? 'border border-dotted border-black' : ''}`}>
      <Icon24 faded={disabled}>
        <g className={disabled ? 'saturate-[.3]' : ''}>{icons[icon]}</g>
      </Icon24>
    </span>
  </button>
);

const Panel = ({ title, children }) => {
  const [open, setOpen] = useState(Boolean(children));
  return (
    <section className="border-b border-[#c2c2c2] bg-white">
      <button
        type="button"
        aria-expanded={open}
        onClick={() => setOpen(!open)}
        className={`flex w-full items-start justify-between pr-[6px] pl-[7px] text-[14px] leading-[26px] text-[#2a86b8] ${open ? 'h-[30px]' : 'h-[23px]'}`}
      >
        {title}
        <span className="mt-2 flex"><Chevron up={open} /></span>
      </button>
      {open && children && <div className="flex flex-col gap-[2px] px-[9px] pb-2">{children}</div>}
    </section>
  );
};

const Picker = ({ id, label, value, wide, children }) => (
  <div className="flex items-start gap-[2px]">
    <label htmlFor={id} className="flex-1 text-[12px] leading-[25px]">{label}</label>
    <div className={`relative shrink-0 ${wide ? 'w-[141px]' : 'w-[117px]'}`}>
      <select id={id} className="block h-[25px] w-full appearance-none border border-[#a8a8a8] bg-white pr-[19px] pl-1 text-[12px] leading-[23px] text-black">
        <option>{value}</option>
      </select>
      <span className="pointer-events-none absolute inset-y-0 right-[6px] flex items-center"><Caret /></span>
    </div>
    {children}
  </div>
);

const Row = ({ label, low, children }) => (
  <div className="flex h-8 gap-[2px]">
    <span className={`flex-1 text-[12px] ${low ? 'leading-9' : 'leading-8'}`}>{label}</span>
    {children}
  </div>
);

const SubPanel = ({ title }) => (
  <button type="button" className="flex h-6 items-center justify-between border border-[#d4dcdc] bg-[#eff6f6] pr-[6px] pl-2 text-[12px] text-[#2a86b8]">
    {title}
    <Chevron small />
  </button>
);

const specs = [
  { label: '指定部件', icon: 'part' },
  { label: '指定检查', icon: 'check', off: true },
  { label: '指定切削区域', icon: 'cutArea', focused: true },
  { label: '指定修剪边界', icon: 'trim', off: true },
  { label: '切削区域', icon: 'cutRegion', off: true },
];

const OperationDialog = () => (
  <div role="dialog" aria-label="区域轮廓铣" className="absolute top-[2px] left-[13px] w-[328px] text-black">
    <header className="flex h-6 items-center bg-[#5b8880] pr-[9px] pl-2 text-[13px] text-white">
      <svg width="14" height="14" viewBox="0 0 14 14" fill="none" stroke="#fff" aria-hidden="true">
        <circle cx="7" cy="7" r="4" strokeWidth="2.500" />
        <path d="M7 0v3M7 11v3M0 7h3M11 7h3M2 2l2 2M10 10l2 2M12 2l-2 2M4 10l-2 2" strokeWidth="2" />
      </svg>
      <h1 className="ml-[10px] flex-1 leading-6">区域轮廓铣 - [CONTOUR_AREA]</h1>
      <button type="button" aria-label="关闭">
        <svg width="13" height="12" viewBox="0 0 13 12" stroke="#fff" strokeWidth="2.200" aria-hidden="true"><path d="m1.500 1 10 10M11.500 1l-10 10" /></svg>
      </button>
    </header>
    <div className="border border-t-0 border-[#bcbcbc] bg-[#e8e8e8] px-[5px] pt-1">
      <div className="flex flex-col gap-[3px]">
        <Panel title="几何体">
          <Picker id="geometry" label="几何体" value="MCS_MILL">
            <IconButton icon="geometry" label="新建几何体" />
            <IconButton icon="wrench" label="编辑几何体" />
          </Picker>
          {specs.map((s) => (
            <Row key={s.label} label={s.label} low>
              <IconButton icon={s.icon} label={s.label} />
              <IconButton icon="torch" label="显示" disabled={s.off} focused={s.focused} />
            </Row>
          ))}
        </Panel>
        <Panel title="驱动方法">
          <Picker id="drive" label="方法" value="区域铣削" wide>
            <IconButton icon="wrench" label="编辑" />
          </Picker>
        </Panel>
        <Panel title="工具">
          <Picker id="tool" label="刀具" value="R2.0 (铣刀-球头铣)">
            <IconButton icon="newTool" label="新建刀具" />
            <IconButton icon="editTool" label="编辑刀具" />
          </Picker>
          <SubPanel title="输出" />
          <SubPanel title="换刀设置" />
        </Panel>
        <Panel title="刀轴" />
        <Panel title="刀轨设置">
          <Picker id="method" label="方法" value="METHOD">
            <IconButton icon="method" label="新建方法" />
            <IconButton icon="wrench" label="编辑方法" disabled />
          </Picker>
          <Row label="切削参数"><IconButton icon="cutParams" label="切削参数" /></Row>
          <Row label="非切削移动"><IconButton icon="nonCut" label="非切削移动" /></Row>
          <Row label="进给率和速度"><IconButton icon="feeds" label="进给率和速度" /></Row>
        </Panel>
        <Panel title="机床控制" />
        <Panel title="程序" />
        <Panel title="描述" />
        <Panel title="选项" />
        <Panel title="操作">
          <div className="flex justify-center gap-[2px]">
            <IconButton icon="generate" label="生成" />
            <IconButton icon="replay" label="重播" />
            <IconButton icon="verify" label="确认" />
            <IconButton icon="list" label="列表" />
          </div>
        </Panel>
      </div>
      <div className="flex h-[17px] items-center justify-center border-b border-[#d0d0d0] pt-[2px]">
        <svg width="10" height="5" viewBox="0 0 10 5" aria-hidden="true"><path d="M0 5h10L5 0z" /></svg>
      </div>
      <div className="flex justify-end gap-[5px] pt-2 pr-[10px] pb-[10px] text-[12px]">
        <button type="button" className="h-[25px] w-[54px] border border-[#4aa0d0] bg-[#9bcbe5]">确定</button>
        <button type="button" className="h-[25px] w-[54px] border border-[#a8a8a8] bg-[#c9c9cd]">取消</button>
      </div>
    </div>
  </div>
);

export default function App() {
  return (
    <div className="relative flex h-screen w-full flex-col overflow-hidden bg-white font-['Noto_Sans','Noto_Sans_CJK_SC',sans-serif] text-black">
      <div className="flex h-[23px] shrink-0 items-center justify-between pr-[114px] pl-[7px]">
        <Separator className="h-4" />
        <span className="text-[12px] leading-5 whitespace-pre">NX 10 - 加工 - [_model1.prt （修改的） ]</span>
      </div>
      <nav className="flex h-7 shrink-0 items-center bg-[#c8d8d7] text-[13px]">
        <span className="h-full w-[60px] bg-[#5b8880]" />
        <a href="#tools" className="ml-[282px]">工具</a>
        <a href="#modules" className="ml-[25px]">应用模块</a>
      </nav>
      <div className="shrink-0">
        <Ribbon />
        <SelectionBar />
      </div>
      <div className="flex min-h-0 flex-1">
        <Navigator />
        <Viewport />
      </div>
      <OperationDialog />
    </div>
  );
}
